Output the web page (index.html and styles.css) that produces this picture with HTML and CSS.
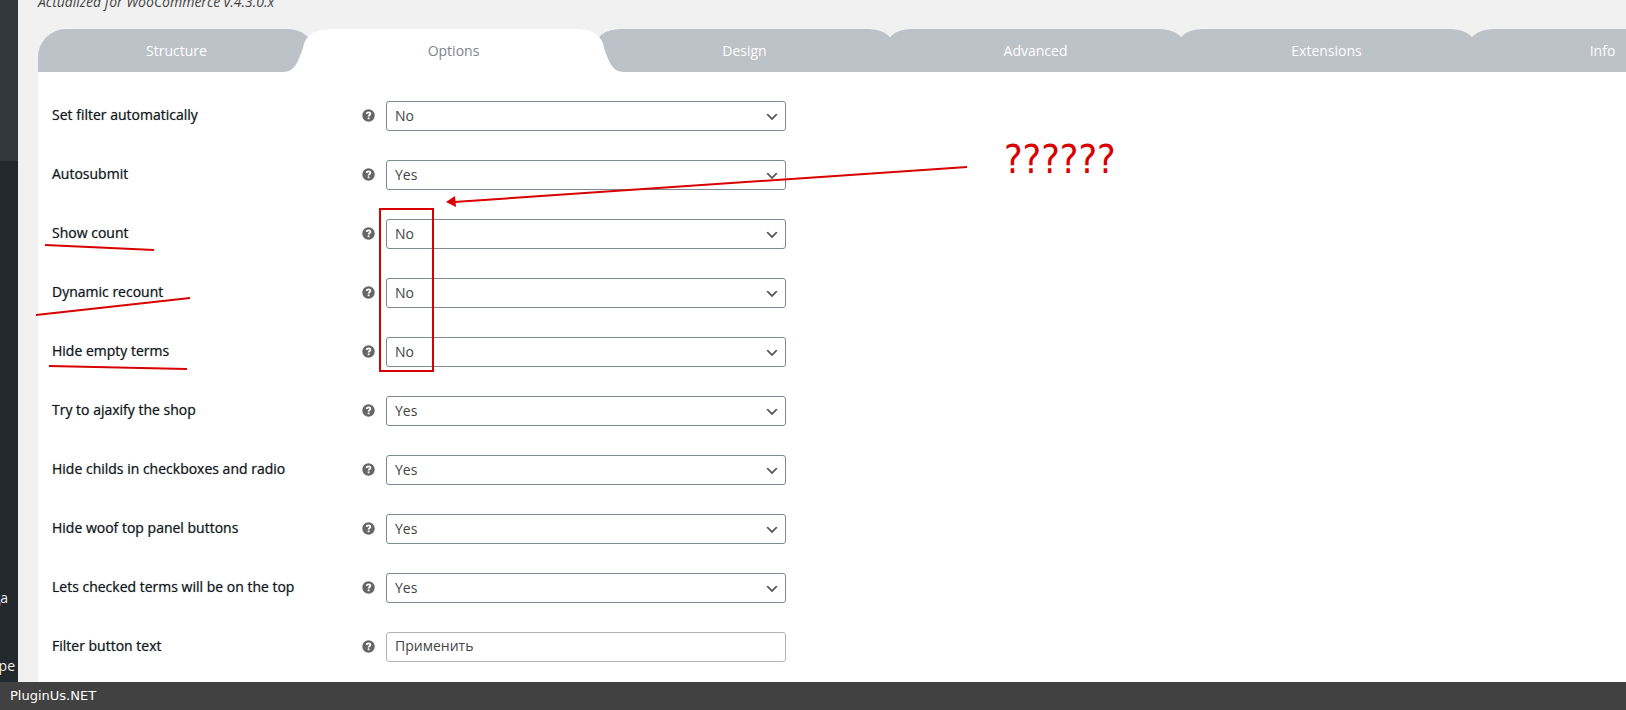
FILE: index.html
```html
<!DOCTYPE html>
<html lang="en">
  <head>
    <meta charset="utf-8">
    <meta name="viewport" content="width=device-width,initial-scale=1.0">
    <title>WOOF - Products Filter Options</title>
    <link rel="stylesheet" href="styles.css">
  </head>
  <body>
    <svg width="0" height="0" class="sprite" aria-hidden="true">
      <symbol id="help" viewBox="0 0 13 13">
        <circle cx="6.5" cy="6.5" r="6.2" fill="#666" />
        <path d="M4.7 5.1C4.7 3.9 5.5 3.3 6.6 3.3C7.7 3.3 8.4 4 8.4 4.9C8.4 6 6.6 6.1 6.6 7.5" fill="none" stroke="#fff" stroke-width="1.7" />
        <rect x="5.7" y="8.4" width="1.8" height="1.8" fill="#fff" />
      </symbol>
    </svg>

    <div id="wrap">
      <nav id="sidebar">
        <div class="current-menu"></div>
        <a href="#" class="menu-item sub">ца</a>
        <a href="#" class="menu-item">ре</a>
      </nav>

      <main id="content">
        <p class="version">Actualized for WooCommerce v.4.3.0.x</p>

        <nav class="tabs">
          <a href="#tabs-1" class="tab">Structure</a>
          <a href="#tabs-2" class="tab active">
            <svg class="wing left" viewBox="0 0 22 24"><path d="M0 24C12 24 15 13 19 3L20 0H22V24Z" fill="#fff" /></svg>
            Options
            <svg class="wing right" viewBox="0 0 22 24"><path d="M22 24C10 24 7 13 3 3L2 0H0V24Z" fill="#fff" /></svg>
          </a>
          <a href="#tabs-3" class="tab">Design</a>
          <a href="#tabs-4" class="tab">Advanced</a>
          <a href="#tabs-5" class="tab">Extensions</a>
          <a href="#tabs-6" class="tab">Info</a>
        </nav>

        <form id="options">
          <div class="option">
            <label for="autofilter">Set filter automatically</label>
            <svg class="help"><use href="#help" /></svg>
            <select id="autofilter"><option>No</option><option>Yes</option></select>
          </div>
          <div class="option">
            <label for="autosubmit">Autosubmit</label>
            <svg class="help"><use href="#help" /></svg>
            <select id="autosubmit"><option>Yes</option><option>No</option></select>
          </div>
          <div class="option">
            <label for="show-count">Show count</label>
            <svg class="help"><use href="#help" /></svg>
            <select id="show-count"><option>No</option><option>Yes</option></select>
          </div>
          <div class="option">
            <label for="recount">Dynamic recount</label>
            <svg class="help"><use href="#help" /></svg>
            <select id="recount"><option>No</option><option>Yes</option></select>
          </div>
          <div class="option">
            <label for="hide-empty">Hide empty terms</label>
            <svg class="help"><use href="#help" /></svg>
            <select id="hide-empty"><option>No</option><option>Yes</option></select>
          </div>
          <div class="option">
            <label for="ajaxify">Try to ajaxify the shop</label>
            <svg class="help"><use href="#help" /></svg>
            <select id="ajaxify"><option>Yes</option><option>No</option></select>
          </div>
          <div class="option">
            <label for="hide-childs">Hide childs in checkboxes and radio</label>
            <svg class="help"><use href="#help" /></svg>
            <select id="hide-childs"><option>Yes</option><option>No</option></select>
          </div>
          <div class="option">
            <label for="hide-panel">Hide woof top panel buttons</label>
            <svg class="help"><use href="#help" /></svg>
            <select id="hide-panel"><option>Yes</option><option>No</option></select>
          </div>
          <div class="option">
            <label for="checked-top">Lets checked terms will be on the top</label>
            <svg class="help"><use href="#help" /></svg>
            <select id="checked-top"><option>Yes</option><option>No</option></select>
          </div>
          <div class="option">
            <label for="button-text">Filter button text</label>
            <svg class="help"><use href="#help" /></svg>
            <input type="text" id="button-text" value="Применить">
          </div>
        </form>
      </main>

      <!-- red pen marks over the form -->
      <svg id="marks" width="1200" height="400">
        <g fill="none" stroke="#d90000" stroke-width="2">
          <path d="M45 245L154 250" />
          <path d="M36 315L190 298" />
          <path d="M49 366L187 369" />
          <rect x="380" y="209" width="53" height="162" />
          <path d="M454 202L967 167" />
        </g>
        <path d="M446 202L455 196L456 207Z" fill="#d90000" />
        <text x="1004" y="173">??????</text>
      </svg>
    </div>

    <footer>PluginUs.NET</footer>
  </body>
</html>
```
FILE: styles.css
```css
* {
  box-sizing: border-box;
}
body {
  margin: 0;
  height: 100vh;
  display: flex;
  flex-direction: column;
  overflow: hidden;
  background: #f1f1f1;
  color: #444;
  font-family: "Open Sans", sans-serif;
  font-size: 14px;
  line-height: 20px;
}
a {
  text-decoration: none;
}
.sprite {
  position: absolute;
}
#wrap {
  position: relative;
  flex: 1;
  min-height: 0;
  display: flex;
  overflow: hidden;
}
#sidebar {
  flex: 0 0 18px;
  display: flex;
  flex-direction: column;
  overflow: hidden;
  background: #23282d;
  padding-bottom: 6px;
}
.current-menu {
  height: 161px;
  margin-bottom: auto;
  background: #32373c;
}
.menu-item {
  display: flex;
  justify-content: flex-end;
  padding-right: 3px;
  color: #eee;
}
.menu-item.sub {
  padding-right: 10px;
  margin-bottom: 48px;
}
#content {
  flex: 1;
  min-width: 0;
  display: flex;
  flex-direction: column;
  padding-left: 20px;
}
.version {
  margin: -8px 0 17px;
  font-style: italic;
}
.tabs {
  display: flex;
}
.tab {
  position: relative;
  flex: 0 0 301px;
  height: 43px;
  margin-left: -10px;
  border-radius: 26px 26px 0 0 / 20px 20px 0 0;
  background: #bdc1c8;
  color: #fff;
  line-height: 43px;
  text-align: center;
}
.tab:first-child {
  flex-basis: 275px;
  margin-left: 0;
  padding-left: 2px;
  border-radius: 28px 26px 0 0 / 28px 20px 0 0;
}
.tab:last-child {
  flex-basis: 271px;
}
.tab.active {
  z-index: 1;
  background: #fff;
  color: #808488;
}
.wing {
  position: absolute;
  bottom: 0;
  width: 22px;
  height: 24px;
}
.wing.left {
  right: calc(100% - 2px);
}
.wing.right {
  left: calc(100% - 2px);
}
#options {
  flex: 1;
  display: flex;
  flex-direction: column;
  gap: 29px;
  padding: 29px 14px;
  background: #fff;
}
.option {
  display: grid;
  grid-template-columns: 310px 24px minmax(0, 400px);
  align-items: center;
}
.option label {
  color: #14191e;
  font-weight: 500;
  text-shadow: 0 0 1px rgba(35, 40, 45, 0.6);
  padding-bottom: 2px;
}
.help {
  width: 13px;
  height: 13px;
  margin-bottom: 1px;
}
.option select,
.option input {
  width: 100%;
  height: 30px;
  margin: 0;
  padding: 0 24px 0 8px;
  border: 1px solid #7e8993;
  border-radius: 3px;
  background: #fff;
  color: #444;
  font: inherit;
}
.option select {
  appearance: none;
  background: #fff url("data:image/svg+xml,%3Csvg xmlns='http://www.w3.org/2000/svg' viewBox='0 0 20 20'%3E%3Cpath d='M5 6l5 5 5-5 2 1-7 7-7-7 2-1z' fill='%23555'/%3E%3C/svg%3E") no-repeat right 5px top 55%;
  background-size: 16px 16px;
}
.option input {
  padding-bottom: 3px;
  border-color: #b4b4b4;
}
#marks {
  position: absolute;
  top: 0;
  left: 0;
  z-index: 2;
  pointer-events: none;
}
#marks text {
  fill: #d90000;
  font-family: "DejaVu Sans Condensed", "DejaVu Sans", sans-serif;
  font-size: 39px;
}
footer {
  flex: 0 0 28px;
  padding-left: 10px;
  background: #414141;
  color: #fff;
  font-family: "DejaVu Sans", sans-serif;
  font-size: 13px;
  line-height: 28px;
}
```
